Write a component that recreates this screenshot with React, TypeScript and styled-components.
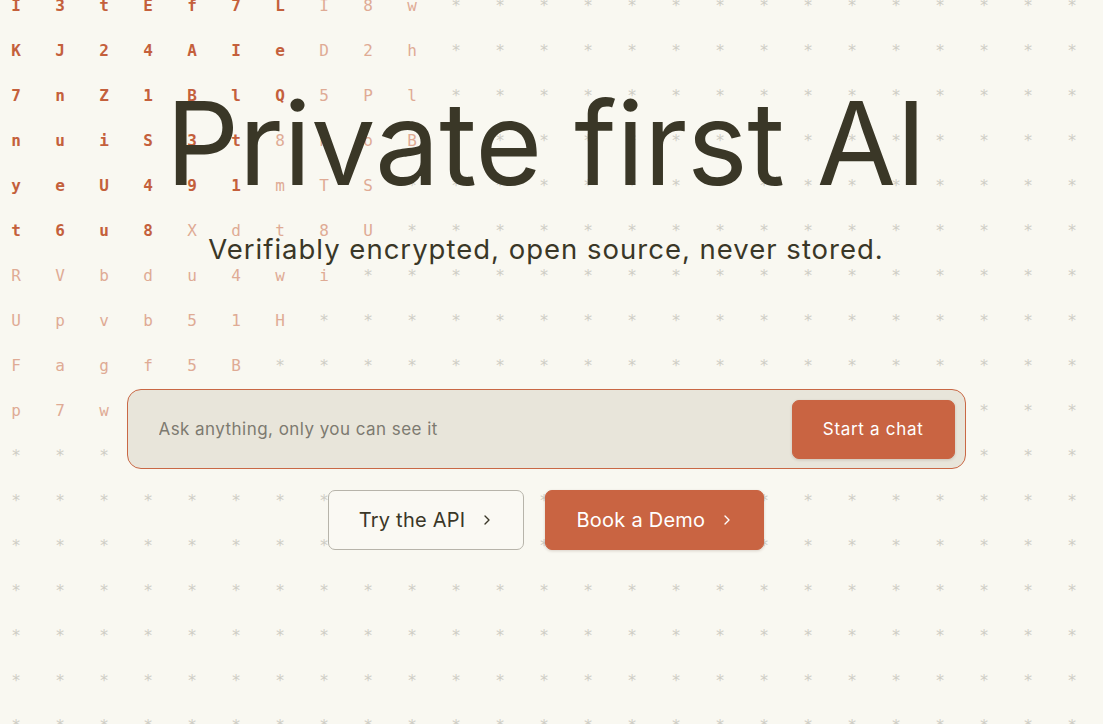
import React from "react";
import styled, { createGlobalStyle } from "styled-components";
import { ChevronRight } from "lucide-react";

const GlobalStyle = createGlobalStyle`
  html, body { margin: 0; padding: 0; background: #f9f8f1; }
  body { font-family: "Inter", "Open Sans", sans-serif; color: #3a3727; }
  * { box-sizing: border-box; }
`;

const Page = styled.main`
  position: relative;
  width: 100%;
  height: 724px;
  overflow: hidden;
  background: #f9f8f1;
`;

const Backdrop = styled.div`
  position: absolute;
  inset: 0;
  pointer-events: none;
`;

const CharGrid = styled.div`
  display: grid;
  grid-template-columns: repeat(26, 44px);
  grid-auto-rows: 45px;
  margin: -17px 0 0 -6px;
`;

type Tone = "strong" | "soft" | "mute";

const Cell = styled.span<{ $tone: Tone }>`
  display: flex;
  align-items: center;
  justify-content: center;
  font-family: "DejaVu Sans Mono", "Liberation Mono", monospace;
  font-size: 16px;
  font-weight: ${(p) => (p.$tone === "strong" ? 700 : 400)};
  color: ${(p) =>
    p.$tone === "strong" ? "#c4603c" : p.$tone === "soft" ? "#dfab95" : "#cfcdc5"};
`;

const Hero = styled.section`
  position: relative;
  z-index: 1;
  display: flex;
  flex-direction: column;
  align-items: center;
  padding: 86px 11px 0 0;
`;

const Title = styled.h1`
  margin: 0;
  font-family: "Inter", sans-serif;
  font-weight: 400;
  font-size: 115px;
  line-height: 1;
  letter-spacing: -0.3px;
  color: #3a3727;
`;

const Subtitle = styled.p`
  margin: 32px 0 0;
  font-family: "Inter", sans-serif;
  font-weight: 400;
  font-size: 27.5px;
  letter-spacing: 1px;
  line-height: 1.2;
  color: #3a3727;
`;

const AskBar = styled.form`
  margin-top: 123px;
  width: 839px;
  height: 80px;
  display: flex;
  align-items: center;
  justify-content: space-between;
  padding: 0 10px 0 29px;
  background: #e8e5da;
  border: 1px solid #c96845;
  border-radius: 14px;
`;

const AskInput = styled.input`
  flex: 1;
  border: none;
  outline: none;
  background: transparent;
  font-family: "Inter", sans-serif;
  font-size: 17px;
  letter-spacing: 0.45px;
  color: #3a3727;
  &::placeholder { color: #7d7a70; }
`;

const Button = styled.button<{ $variant: "primary" | "outline"; $size: "md" | "lg" }>`
  display: inline-flex;
  align-items: center;
  justify-content: center;
  gap: 14px;
  height: ${(p) => (p.$size === "lg" ? "60px" : "59px")};
  padding: ${(p) => (p.$size === "lg" ? "0 28px 0 30px" : "0 30px")};
  border-radius: 7px;
  font-family: "Inter", sans-serif;
  font-size: ${(p) => (p.$size === "lg" ? "20px" : "17px")};
  letter-spacing: ${(p) => (p.$size === "lg" ? "0.25px" : "0.7px")};
  cursor: pointer;
  background: ${(p) => (p.$variant === "primary" ? "#c96442" : "#faf9f3")};
  color: ${(p) => (p.$variant === "primary" ? "#ffffff" : "#3a3727")};
  border: 1px solid ${(p) => (p.$variant === "primary" ? "#c96442" : "#b7b4aa")};
  box-shadow: ${(p) => (p.$variant === "primary" ? "0 1px 3px rgba(80,40,20,0.18)" : "none")};
`;

const Actions = styled.div`
  margin-top: 21px;
  display: flex;
  gap: 21px;
`;

const rows: [string, string][] = [
  ["I3tEf7L", "I8w"],
  ["KJ24AIe", "D2h"],
  ["7nZ1BlQ", "5Pl"],
  ["nuiS3t", "8hoB"],
  ["yeU491", "mTS"],
  ["t6u8", "Xdt8U"],
  ["", "RVbdu4wi"],
  ["", "Upvb51H"],
  ["", "Fagf5B"],
  ["", "p7w"],
];

const COLS = 26;
const ROWS = 17;

function buildCells() {
  const out: { ch: string; tone: Tone }[] = [];
  for (let r = 0; r < ROWS; r++) {
    const [strong, soft] = rows[r] ?? ["", ""];
    for (let c = 0; c < COLS; c++) {
      if (c < strong.length) out.push({ ch: strong[c], tone: "strong" });
      else if (c < strong.length + soft.length)
        out.push({ ch: soft[c - strong.length], tone: "soft" });
      else out.push({ ch: "*", tone: "mute" });
    }
  }
  return out;
}

const cells = buildCells();

export default function App() {
  return (
    <>
      <GlobalStyle />
      <Page>
        <Backdrop aria-hidden>
          <CharGrid>
            {cells.map((c, i) => (
              <Cell key={i} $tone={c.tone}>
                {c.ch}
              </Cell>
            ))}
          </CharGrid>
        </Backdrop>
        <Hero>
          <Title>Private first AI</Title>
          <Subtitle>Verifiably encrypted, open source, never stored.</Subtitle>
          <AskBar onSubmit={(e) => e.preventDefault()}>
            <AskInput placeholder="Ask anything, only you can see it" />
            <Button type="submit" $variant="primary" $size="md">
              Start a chat
            </Button>
          </AskBar>
          <Actions>
            <Button type="button" $variant="outline" $size="lg">
              Try the API <ChevronRight size={16} strokeWidth={2} />
            </Button>
            <Button type="button" $variant="primary" $size="lg">
              Book a Demo <ChevronRight size={16} strokeWidth={2} />
            </Button>
          </Actions>
        </Hero>
      </Page>
    </>
  );
}
